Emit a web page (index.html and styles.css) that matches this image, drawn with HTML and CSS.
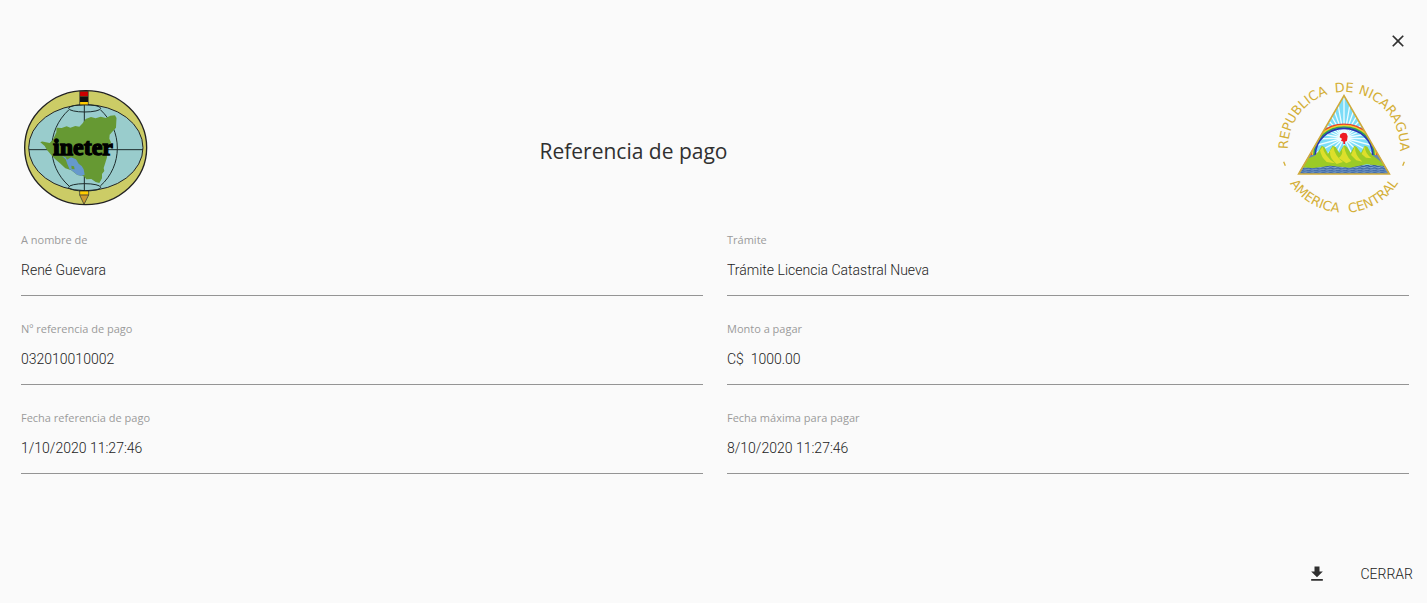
FILE: index.html
```html
<!DOCTYPE html>
<html lang="es">
<head>
<meta charset="utf-8">
<meta name="viewport" content="width=device-width, initial-scale=1">
<title>Referencia de pago</title>
<link rel="stylesheet" href="styles.css">
</head>
<body>
<main class="dialog">
  <div class="topbar">
    <button class="icon-button" type="button" aria-label="Cancelar">
      <svg width="24" height="24" viewBox="0 0 24 24"><path fill="currentColor" d="M19 6.41 17.59 5 12 10.59 6.41 5 5 6.41 10.59 12 5 17.59 6.41 19 12 13.41 17.59 19 19 17.59 13.41 12z"/></svg>
    </button>
  </div>

  <header class="header">
    <svg class="logo" viewBox="24 23 372 346" role="img" aria-label="ineter">
      <ellipse cx="209" cy="196" rx="183" ry="171" fill="#cccc66" stroke="#222" stroke-width="4"/>
      <ellipse cx="209.500" cy="196" rx="171.500" ry="129" fill="#99cccc" stroke="#222" stroke-width="3"/>
      <g fill="none" stroke="#1c2b2b" stroke-width="3">
        <path d="M39 202H381M205 67V325"/>
        <ellipse cx="206" cy="78" rx="48" ry="11"/>
        <ellipse cx="206" cy="315" rx="48" ry="11"/>
        <path d="M159 82C90 145 90 250 159 311M253 82C321 145 321 250 253 311"/>
      </g>
      <path fill="#669933" d="M73 180Q78 175 86 179L101 182 111 172 121 150 122 136 137 137 152 132 163 136 178 131 190 133 200 123 209 110 225 104 239 108 254 103 270 107 283 100 297 99Q303 105 301 116L300 136 291 146 281 157 280 169 285 180 279 190 272 207 273 225 268 241 263 257 265 266 258 275 258 288 250 302 239 299 226 290 211 291 204 282 184 278 166 264 148 258 132 243 117 230 104 216 93 203 86 191Z"/>
      <path fill="#6699cc" d="M138 221 149 225 153 232 165 225 180 231 188 244 197 251 203 261 206 277 196 281 183 277 172 268 160 259 154 245 149 231Z"/>
      <path fill="#669933" d="M166 250 174 252 176 261 167 260Z"/>
      <text class="logo-word" x="201" y="218" text-anchor="middle">ineter</text>
      <path fill="#c00" d="M192 27H216V42H192z"/>
      <path fill="#111" d="M192 42H216V59H192z"/>
      <path fill="#fc0" d="M192 59H216V68H192zM192 326H217V337H192z"/>
      <path fill="#c93" d="M192 337H217L204 365Z"/>
      <path fill="none" stroke="#222" stroke-width="2" d="M191 27H217V67H191zM191 326H218V338L204 366 191 338zM191 338H218"/>
    </svg>

    <h1 class="title">Referencia de pago</h1>

    <div class="emblem-cell">
      <svg class="emblem" viewBox="27 20 390 390" role="img" aria-label="República de Nicaragua, América Central">
        <defs>
          <path id="arc-top" d="M54 215A168 168 0 0 1 390 215"/>
          <path id="arc-bottom" d="M28 215A194 194 0 0 0 416 215"/>
          <clipPath id="tri"><path d="M222 57 359 293H85Z"/></clipPath>
          <pattern id="waves" width="22" height="14" patternUnits="userSpaceOnUse">
            <path fill="#8fb2d8" d="M0 0H22V14H0z"/>
            <path fill="none" stroke="#315c9c" stroke-width="4" d="M0 3Q6 0 11 3T22 3M0 10Q6 7 11 10T22 10"/>
          </pattern>
        </defs>
        <g class="emblem-text">
          <text><textPath href="#arc-top" startOffset="20%" text-anchor="middle">REPUBLICA</textPath></text>
          <text><textPath href="#arc-top" startOffset="50%" text-anchor="middle">DE</textPath></text>
          <text><textPath href="#arc-top" startOffset="80%" text-anchor="middle">NICARAGUA</textPath></text>
          <text><textPath href="#arc-bottom" startOffset="33%" text-anchor="middle">AMERICA</textPath></text>
          <text><textPath href="#arc-bottom" startOffset="67%" text-anchor="middle">CENTRAL</textPath></text>
        </g>
        <path stroke="#d4af37" stroke-width="4" d="M41 256 46 268M403 256 398 268"/>
        <g clip-path="url(#tri)">
          <path fill="#7bdcf7" d="M85 50H360V293H85z"/>
          <path fill="none" stroke="#edfcff" stroke-width="4" d="M222 185V50M222 185 198 50M222 185 246 50M222 185 174 50M222 185 270 50M222 185 150 60M222 185 294 60M222 185 125 75M222 185 319 75M222 185 105 100M222 185 339 100M222 185 90 130M222 185 354 130M222 185 90 162M222 185 354 162M222 185 90 190M222 185 354 190M222 185 90 220M222 185 354 220M222 185 100 250M222 185 344 250M222 185 145 260M222 185 299 260M222 185 185 260M222 185 259 260M222 185V260"/>
          <path fill="#6688aa" d="M85 232H148V293H85zM300 232H360V293H300z"/>
          <g fill="none" stroke-width="5">
            <path stroke="#e8402c" d="M124 236A98 92 0 0 1 320 236"/>
            <path stroke="#f5cc29" d="M128 236A94 88 0 0 1 316 236"/>
            <path stroke="#31a84a" d="M132 236A90 84 0 0 1 312 236"/>
            <path stroke="#2932b0" d="M136 236A86 80 0 0 1 308 236"/>
          </g>
          <path fill="url(#waves)" d="M85 266H360V293H85z"/>
          <path fill="#9bcb26" d="M91 273 112 247 134 238 146 224 155 208 163 212 174 232 188 208 197 212 208 230 222 206 231 212 242 230 253 208 260 212 273 230 284 208 292 211 306 236 330 254 348 270 290 264 240 274 180 268 130 275Z"/>
          <path fill="#dddf2b" d="M158 211Q162 238 195 261L170 257Q153 242 150 222zM190 210Q194 240 219 257L200 263Q178 246 180 224zM222 208Q226 236 244 254L229 261 206 245Q220 235 216 220zM255 210Q254 237 277 256L259 252 243 236zM285 210Q284 231 305 246L288 244 275 233z"/>
        </g>
        <path fill="#ed1c24" d="M211 174 219 169 229 171 233 180 231 193 225 196 225 203H220V196L213 193 216 187 209 183Z"/>
        <path fill="none" stroke="#d0aa3b" stroke-width="5" d="M222 58 358 293H86Z"/>
      </svg>
    </div>
  </header>

  <form class="fields">
    <div class="field"><label for="nombre">A nombre de</label><input id="nombre" type="text" readonly value="René Guevara"></div>
    <div class="field"><label for="tramite">Trámite</label><input id="tramite" type="text" readonly value="Trámite Licencia Catastral Nueva"></div>
    <div class="field"><label for="numero">Nº referencia de pago</label><input id="numero" type="text" readonly value="032010010002"></div>
    <div class="field"><label for="monto">Monto a pagar</label><input id="monto" type="text" readonly value="C$&nbsp; 1000.00"></div>
    <div class="field"><label for="fecha">Fecha referencia de pago</label><input id="fecha" type="text" readonly value="1/10/2020 11:27:46"></div>
    <div class="field"><label for="maxima">Fecha máxima para pagar</label><input id="maxima" type="text" readonly value="8/10/2020 11:27:46"></div>
  </form>

  <footer class="actions">
    <button class="icon-button" type="button" aria-label="Descargar">
      <svg width="20" height="20" viewBox="0 0 24 24"><path fill="currentColor" d="M19 9h-4V3H9v6H5l7 7 7-7zM5 18v2h14v-2H5z"/></svg>
    </button>
    <button class="text-button" type="button">CERRAR</button>
  </footer>
</main>
</body>
</html>
```
FILE: styles.css
```css
* {
  box-sizing: border-box;
}

body {
  margin: 0;
  background: #fafafa;
  color: #303030;
  font-family: Roboto, "Open Sans", sans-serif;
}

button {
  border: 0;
  padding: 0;
  background: none;
  color: inherit;
  font: inherit;
  cursor: pointer;
}

.dialog {
  display: flex;
  flex-direction: column;
  min-height: 100vh;
  padding: 21px 18px 9px 21px;
}

.topbar {
  display: flex;
  justify-content: flex-end;
  margin-right: -9px;
}

.icon-button {
  display: grid;
  place-items: center;
  width: 40px;
  height: 40px;
}

.topbar .icon-button svg {
  width: 20px;
  height: 20px;
}

.header {
  display: grid;
  grid-template-columns: 130px 1fr 293px;
  align-items: center;
  margin-top: 22px;
}

.logo {
  display: block;
  width: 124px;
  margin-left: 3px;
}

.logo-word {
  font: bold 72px "Liberation Serif", serif;
  fill: #000;
  stroke: #000;
  stroke-width: 4px;
}

.title {
  margin: 0;
  padding-top: 6px;
  text-align: center;
  font: 400 21px/32px "Open Sans", sans-serif;
}

.emblem-cell {
  display: flex;
  justify-content: flex-end;
}

.emblem {
  display: block;
  width: 130px;
  overflow: visible;
}

.emblem-text {
  font: 39px "DejaVu Sans", sans-serif;
  fill: #d4af37;
}

.fields {
  display: grid;
  grid-template-columns: 1fr 1fr;
  gap: 24px;
  margin-top: 18px;
}

.field {
  display: flex;
  flex-direction: column;
  height: 65px;
  border-bottom: 1px solid #949494;
}

.field label {
  color: #9b9b9b;
  font: 11px/18px "Open Sans", sans-serif;
}

.field input {
  width: 100%;
  height: 42px;
  border: 0;
  outline: 0;
  padding: 0;
  background: none;
  color: #222;
  font: 300 14px/20px Roboto, sans-serif;
}

.actions {
  display: flex;
  align-items: center;
  justify-content: flex-end;
  gap: 24px;
  margin-top: auto;
  margin-right: -4px;
}

.text-button {
  font: 300 14px/40px Roboto, sans-serif;
  color: #222;
}
```
